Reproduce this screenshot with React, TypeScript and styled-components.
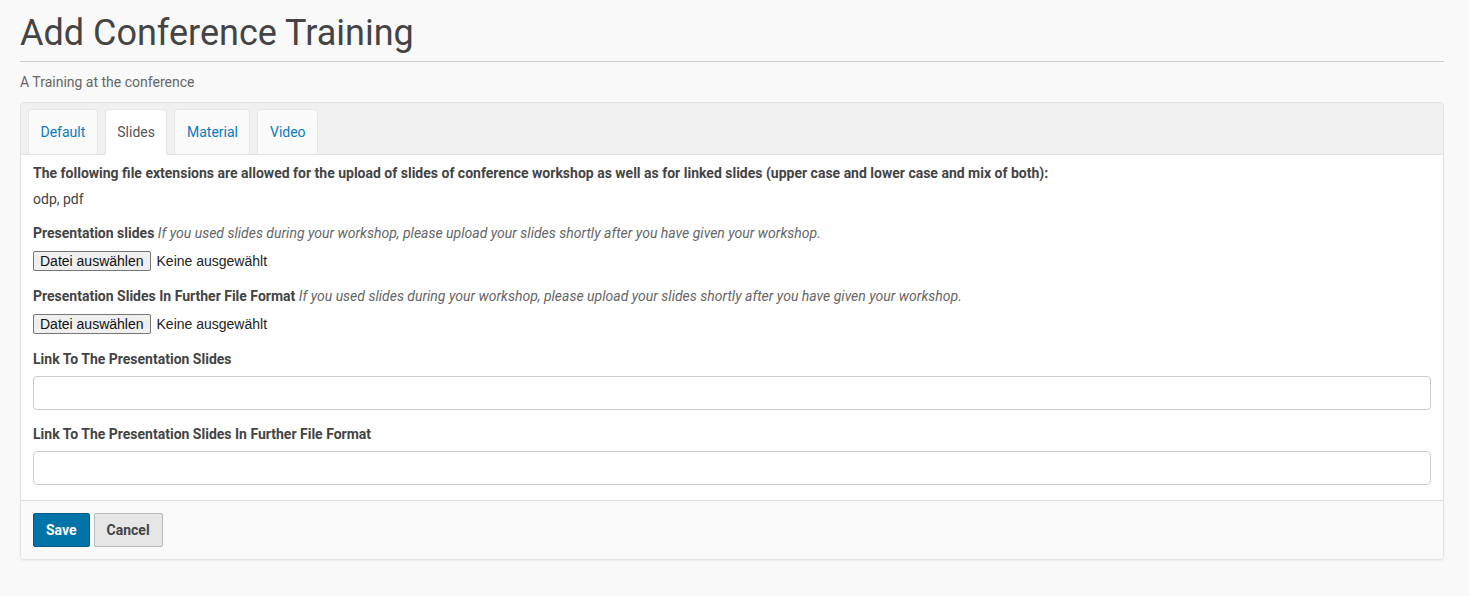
import * as React from 'react';
import styled, { createGlobalStyle } from 'styled-components';

const GlobalStyle = createGlobalStyle`
  html, body {
    margin: 0;
    padding: 0;
    background-color: #f9f9f9;
    font-family: Roboto, "Liberation Sans", sans-serif;
    font-size: 14px;
    color: #444;
  }
`;

const Page = styled.div`
  padding: 0 25px 37px 20px;
`;

const Title = styled.h1`
  margin: 0;
  padding-top: 13px;
  font-size: 36px;
  font-weight: 400;
  line-height: 40px;
  color: #444;
`;

const Rule = styled.hr`
  margin: 8px 0 0;
  border: 0;
  border-top: 1px solid #cfcfcf;
`;

const Subtitle = styled.p`
  margin: 10px 0 10px;
  font-size: 14px;
  line-height: 20px;
  color: #666;
`;

const Panel = styled.div`
  background: #fff;
  border: 1px solid #e3e3e3;
  border-radius: 4px;
  box-shadow: 0 1px 2px rgba(0, 0, 0, 0.05);
  overflow: hidden;
`;

const TabBar = styled.ul`
  display: flex;
  gap: 7px;
  margin: 0;
  padding: 6px 7px 0;
  list-style: none;
  background: #f0f0f0;
  border-bottom: 1px solid #e3e3e3;
`;

const Tab = styled.li<{ $active?: boolean }>`
  height: 46px;
  box-sizing: border-box;
  display: flex;
  align-items: center;
  padding: 0 11.5px;
  margin-bottom: -1px;
  background: ${p => (p.$active ? '#fff' : '#fafafa')};
  border: 1px solid #e6e6e6;
  border-bottom-color: ${p => (p.$active ? '#fff' : '#e3e3e3')};
  border-radius: 4px 4px 0 0;
  color: ${p => (p.$active ? '#555' : '#0a7ac0')};
  font-size: 14px;
  cursor: pointer;
`;

const Body = styled.div`
  padding: 8px 12px 15px;
`;

const Strong = styled.p`
  margin: 0;
  font-weight: 700;
  line-height: 20px;
`;

const Plain = styled.p`
  margin: 6px 0 0;
  line-height: 20px;
`;

const Field = styled.div`
  margin-top: 14px;
`;

const Label = styled.label`
  display: block;
  font-weight: 700;
  line-height: 20px;
`;

const Hint = styled.em`
  font-weight: 400;
  color: #666;
`;

const FileRow = styled.div`
  display: flex;
  align-items: center;
  gap: 6px;
  margin-top: 8px;
  padding-bottom: 1px;
  font-family: "Liberation Sans", Arial, sans-serif;
  font-size: 14px;
  color: #222;
`;

const FileButton = styled.button`
  font-family: "Liberation Sans", Arial, sans-serif;
  font-size: 14px;
  color: #111;
  height: 20px;
  padding: 0 6px;
  background: #efefef;
  border: 1px solid #767676;
  border-radius: 2px;
`;

const TextInput = styled.input`
  display: block;
  box-sizing: border-box;
  width: 100%;
  height: 34px;
  margin-top: 7px;
  padding: 6px 12px;
  border: 1px solid #ccc;
  border-radius: 4px;
  background: #fff;
  font-family: inherit;
  font-size: 14px;
`;

const Footer = styled.div`
  display: flex;
  gap: 4px;
  padding: 12px;
  background: #fafafa;
  border-top: 1px solid #dcdcdc;
`;

const Button = styled.button<{ $primary?: boolean }>`
  height: 34px;
  padding: 0 12px;
  font-family: Roboto, "Liberation Sans", sans-serif;
  font-size: 14px;
  font-weight: 700;
  border-radius: 2px;
  color: ${p => (p.$primary ? '#fff' : '#444')};
  background: ${p => (p.$primary ? '#0074a8' : '#e6e6e6')};
  border: 1px solid ${p => (p.$primary ? '#005d87' : '#b9b9b9')};
  cursor: pointer;
`;

const hint =
  'If you used slides during your workshop, please upload your slides shortly after you have given your workshop.';

const App = () => {
  return (
    <>
      <GlobalStyle />
      <Page>
        <Title>Add Conference Training</Title>
        <Rule />
        <Subtitle>A Training at the conference</Subtitle>
        <Panel>
          <TabBar>
            <Tab>Default</Tab>
            <Tab $active>Slides</Tab>
            <Tab>Material</Tab>
            <Tab>Video</Tab>
          </TabBar>
          <Body>
            <Strong>
              The following file extensions are allowed for the upload of slides of conference workshop as well as for
              linked slides (upper case and lower case and mix of both):
            </Strong>
            <Plain>odp, pdf</Plain>
            <Field>
              <Label>
                Presentation slides <Hint>{hint}</Hint>
              </Label>
              <FileRow>
                <FileButton type="button">Datei auswählen</FileButton>
                <span>Keine ausgewählt</span>
              </FileRow>
            </Field>
            <Field>
              <Label>
                Presentation Slides In Further File Format <Hint>{hint}</Hint>
              </Label>
              <FileRow>
                <FileButton type="button">Datei auswählen</FileButton>
                <span>Keine ausgewählt</span>
              </FileRow>
            </Field>
            <Field>
              <Label>Link To The Presentation Slides</Label>
              <TextInput type="text" />
            </Field>
            <Field>
              <Label>Link To The Presentation Slides In Further File Format</Label>
              <TextInput type="text" />
            </Field>
          </Body>
          <Footer>
            <Button $primary>Save</Button>
            <Button>Cancel</Button>
          </Footer>
        </Panel>
      </Page>
    </>
  );
};

export default App;
